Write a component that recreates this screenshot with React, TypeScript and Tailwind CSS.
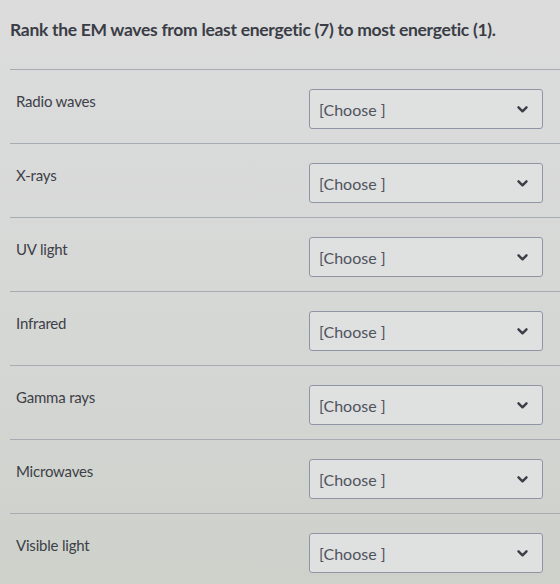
const items = [
  "Radio waves",
  "X-rays",
  "UV light",
  "Infrared",
  "Gamma rays",
  "Microwaves",
  "Visible light",
];

function Chevron() {
  return (
    <svg width="11" height="7" viewBox="0 0 11 7" className="text-[#3b3e48]">
      <path d="M1.5 1.3 L5.5 5.3 L9.5 1.3" fill="none" stroke="currentColor" strokeWidth="2.4" strokeLinecap="round" strokeLinejoin="round" />
    </svg>
  );
}

function Row({ label }: { label: string }) {
  return (
    <div className="flex h-[74px] items-start justify-between border-b border-[#a7abb4] pl-[6px] pr-[17px]">
      <div className="pt-[20px] text-[15px] tracking-[-0.2px] text-[#3d4048]">{label}</div>
      <div className="mt-[19px] flex h-[40px] w-[234px] items-center justify-between rounded-[3px] border border-[#9095a6] bg-[#dfe0e0] pl-[9px] pr-[14px]">
        <span className="pt-[1px] text-[16px] text-[#50535e]">[Choose ]</span>
        <Chevron />
      </div>
    </div>
  );
}

export default function App() {
  return (
    <div
      className="min-h-[584px] w-[560px] overflow-hidden bg-linear-to-b from-[#dcdcdd] via-[#d6d8d6] to-[#cdd1ca] pl-[10px]"
      style={{ fontFamily: "Lato, 'Open Sans', sans-serif" }}
    >
      <div className="flex h-[70px] items-start border-b border-[#a7abb4] pt-[17px]">
        <h1 className="text-[17.5px] font-bold tracking-[-0.3px] text-[#3a3d46]">
          Rank the EM waves from least energetic (7) to most energetic (1).
        </h1>
      </div>
      {items.map((label) => (
        <Row key={label} label={label} />
      ))}
    </div>
  );
}
